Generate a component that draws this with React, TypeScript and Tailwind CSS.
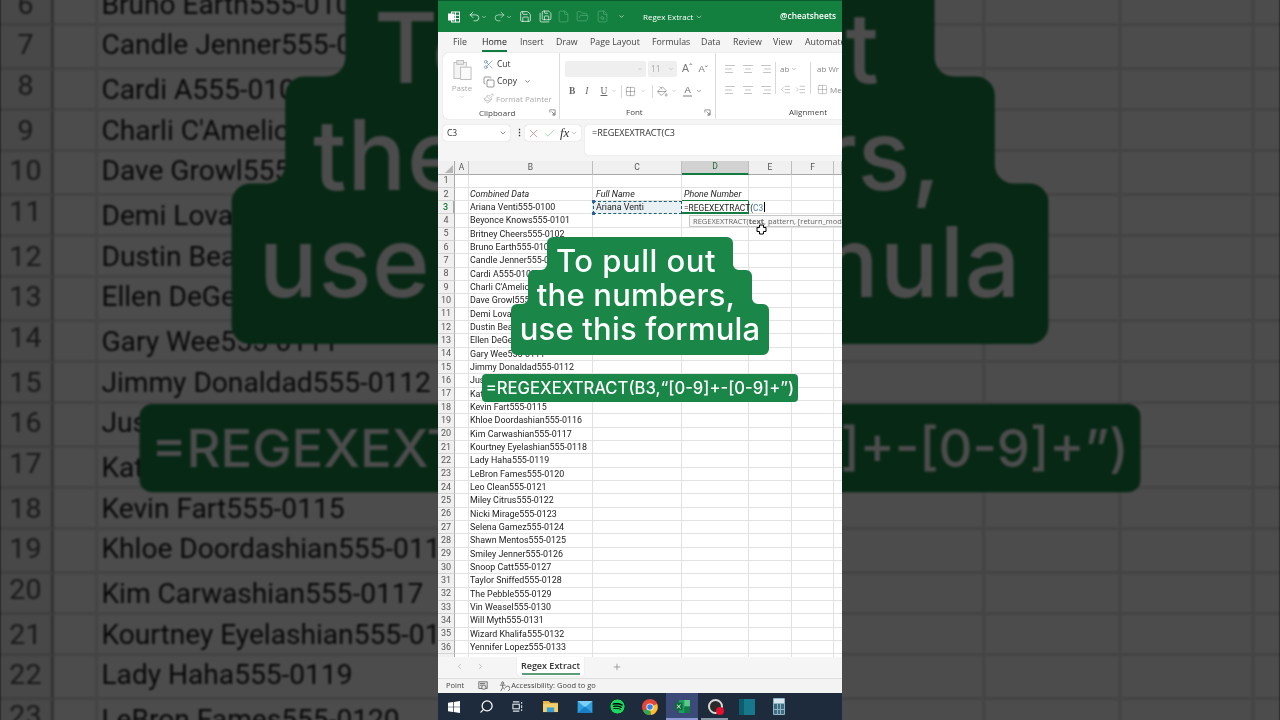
import {
  AlignCenter,
  AlignLeft,
  AlignRight,
  Check,
  ChevronDown,
  ChevronLeft,
  ChevronRight,
  Copy,
  File,
  FileSearch,
  FolderOpen,
  Grid2x2,
  IndentDecrease,
  IndentIncrease,
  PaintBucket,
  Paintbrush,
  Plus,
  Redo2,
  Save,
  SaveAll,
  Scissors,
  Search,
  Undo2,
  X,
} from 'lucide-react';
import { FaSpotify } from 'react-icons/fa';

const ROWS: Record<number, string> = {
  3: 'Ariana Venti555-0100',
  4: 'Beyonce Knows555-0101',
  5: 'Britney Cheers555-0102',
  6: 'Bruno Earth555-0103',
  7: 'Candle Jenner555-0104',
  8: 'Cardi A555-0105',
  9: "Charli C'Amelio555-0106",
  10: 'Dave Growl555-0107',
  11: 'Demi Lovato555-0108',
  12: 'Dustin Beaver555-0109',
  13: 'Ellen DeGenerous555-0110',
  14: 'Gary Wee555-0111',
  15: 'Jimmy Donaldad555-0112',
  16: 'Justin Bieber555-0113',
  17: 'Katy Perry555-0114',
  18: 'Kevin Fart555-0115',
  19: 'Khloe Doordashian555-0116',
  20: 'Kim Carwashian555-0117',
  21: 'Kourtney Eyelashian555-0118',
  22: 'Lady Haha555-0119',
  23: 'LeBron Fames555-0120',
  24: 'Leo Clean555-0121',
  25: 'Miley Citrus555-0122',
  26: 'Nicki Mirage555-0123',
  27: 'Selena Gamez555-0124',
  28: 'Shawn Mentos555-0125',
  29: 'Smiley Jenner555-0126',
  30: 'Snoop Catt555-0127',
  31: 'Taylor Sniffed555-0128',
  32: 'The Pebble555-0129',
  33: 'Vin Weasel555-0130',
  34: 'Will Myth555-0131',
  35: 'Wizard Khalifa555-0132',
  36: 'Yennifer Lopez555-0133',
};

const TABS = [
  { label: 'File', w: 'w-[29px]' },
  { label: 'Home', w: 'w-[38px]' },
  { label: 'Insert', w: 'w-[36px]' },
  { label: 'Draw', w: 'w-[34px]' },
  { label: 'Page Layout', w: 'w-[62px]' },
  { label: 'Formulas', w: 'w-[49px]' },
  { label: 'Data', w: 'w-[32px]' },
  { label: 'Review', w: 'w-[40px]' },
  { label: 'View', w: 'w-[32px]' },
  { label: 'Automate', w: 'w-[50px]' },
];

function Row({ n }: { n: number }) {
  const active = n === 3;
  return (
    <div className="flex h-[13.33px] font-['Roboto',sans-serif] text-[8.9px] leading-[13px] text-[#1c1c1c]">
      <div
        className={`flex w-[17px] items-center justify-center border-r border-b border-r-[#a9a9a9] border-b-[#d4d4d4] bg-[#f0f0f0] text-[9px] ${
          active ? 'border-r-2 border-r-[#107c41] bg-[#dcdcdc] font-medium text-[#107c41]' : 'text-[#555]'
        }`}
      >
        {n}
      </div>
      <div className="w-[14px] border-r border-b border-[#e2e2e2]" />
      <div
        className={`w-[124px] whitespace-nowrap border-r border-b border-[#e2e2e2] pl-[1px] ${
          n === 2 ? 'italic' : ''
        }`}
      >
        {n === 2 ? 'Combined Data' : ROWS[n]}
      </div>
      {active ? (
        <div className="relative w-[89px] border-[1.5px] border-dashed border-[#1f5f72] bg-[#e9f1f5] pl-[2px] leading-[10px]">
          Ariana Venti
          <span className="absolute -top-[2px] -left-[2px] h-[3px] w-[3px] bg-[#2b5fa8]" />
          <span className="absolute -bottom-[2px] -left-[2px] h-[3px] w-[3px] bg-[#2b5fa8]" />
        </div>
      ) : (
        <div className={`w-[89px] border-r border-b border-[#e2e2e2] pl-[3px] ${n === 2 ? 'italic' : ''}`}>
          {n === 2 ? 'Full Name' : ''}
        </div>
      )}
      {active ? (
        <div className="relative w-[67px] whitespace-nowrap border-r border-b-2 border-[#107c41] pl-[2px] text-[8.4px] leading-[12px]">
          =REGEXEXTRACT(<span className="text-[#4f7f9f]">C3</span>
          <span className="ml-[1px] inline-block h-[10px] w-px translate-y-[1px] bg-black" />
        </div>
      ) : (
        <div
          className={`w-[67px] border-r border-b pl-[2px] ${
            n === 2 ? 'border-b-[#107c41] border-r-[#e2e2e2] italic' : 'border-[#e2e2e2]'
          }`}
        >
          {n === 2 ? 'Phone Number' : ''}
        </div>
      )}
      <div className="w-[43px] border-r border-b border-[#e2e2e2]" />
      <div className="w-[42px] border-r border-b border-[#e2e2e2]" />
      <div className="flex-1 border-b border-[#e2e2e2]" />
    </div>
  );
}

function ColHead({ label, w, on }: { label: string; w: string; on?: boolean }) {
  return (
    <div
      className={`flex items-center justify-center border-r border-[#bdbdbd] ${w} ${
        on ? 'border-b-2 border-b-[#107c41] bg-[#d2d2d2] text-[#1b6b3f]' : 'border-b border-b-[#a9a9a9] bg-[#f0f0f0]'
      }`}
    >
      {label}
    </div>
  );
}

function Sheet() {
  const rows = Array.from({ length: 36 }, (_, i) => i + 1);
  return (
    <div className="flex flex-1 flex-col overflow-hidden bg-white">
      <div className="flex h-[13.5px] shrink-0 font-['Roboto',sans-serif] text-[8.5px] text-[#555]">
        <div className="flex w-[17px] items-end justify-end border-r border-b border-[#a9a9a9] bg-[#f0f0f0] pr-[1px] pb-[1px]">
          <div className="h-0 w-0 border-b-[8px] border-l-[8px] border-b-[#b5b5b5] border-l-transparent" />
        </div>
        <ColHead label="A" w="w-[14px]" />
        <ColHead label="B" w="w-[124px]" />
        <ColHead label="C" w="w-[89px]" />
        <ColHead label="D" w="w-[67px]" on />
        <ColHead label="E" w="w-[43px]" />
        <ColHead label="F" w="w-[42px]" />
        <ColHead label="" w="flex-1" />
      </div>
      {rows.map((n) => (
        <Row key={n} n={n} />
      ))}
      <div className="flex flex-1">
        <div className="w-[17px] border-r border-[#a9a9a9] bg-[#f0f0f0]" />
        <div className="w-[14px] border-r border-[#e2e2e2]" />
        <div className="w-[124px] border-r border-[#e2e2e2]" />
        <div className="w-[89px] border-r border-[#e2e2e2]" />
        <div className="w-[67px] border-r border-[#e2e2e2]" />
        <div className="w-[43px] border-r border-[#e2e2e2]" />
        <div className="w-[42px] border-r border-[#e2e2e2]" />
      </div>
    </div>
  );
}

function TitleBar() {
  return (
    <div className="flex h-[32px] shrink-0 items-center border-t border-[#0a5a2e] bg-[#13803f] pl-[10px] font-['Open_Sans',sans-serif] text-white">
      <svg viewBox="0 0 12 12" className="h-[12px] w-[12px]" fill="none" stroke="#fff" strokeWidth="1">
        <rect x="3.5" y="1" width="8" height="10" />
        <path d="M7.5 1v10M3.5 4.3h8M3.5 7.6h8" />
        <rect x="0.5" y="3" width="5.5" height="6" fill="#fff" />
      </svg>
      <Undo2 className="ml-[8px] h-[13px] w-[13px]" strokeWidth={1.3} />
      <ChevronDown className="h-[6px] w-[6px]" strokeWidth={2} />
      <Redo2 className="ml-[6px] h-[13px] w-[13px] text-[#c9e6d4]" strokeWidth={1.3} />
      <ChevronDown className="h-[6px] w-[6px]" strokeWidth={2} />
      <Save className="ml-[7px] h-[13px] w-[13px]" strokeWidth={1.3} />
      <SaveAll className="ml-[7px] h-[13px] w-[13px]" strokeWidth={1.3} />
      <File className="ml-[5px] h-[13px] w-[13px] text-[#52ad79]" strokeWidth={1.3} />
      <FolderOpen className="ml-[6px] h-[13px] w-[13px] text-[#52ad79]" strokeWidth={1.3} />
      <FileSearch className="ml-[7px] h-[13px] w-[13px] text-[#52ad79]" strokeWidth={1.3} />
      <ChevronDown className="ml-[9px] h-[7px] w-[7px]" strokeWidth={2} />
      <span className="ml-[18px] text-[8px]">Regex Extract</span>
      <ChevronDown className="ml-[2px] h-[8px] w-[8px]" strokeWidth={1.5} />
      <span className="ml-auto mr-[6px] text-[8.3px] font-semibold">@cheatsheets</span>
    </div>
  );
}

function TabRow() {
  return (
    <div className="flex h-[21px] shrink-0 items-center pt-[1px] pl-[5px] font-['Open_Sans',sans-serif] text-[8.8px] text-[#444]">
      {TABS.map((t) => (
        <div key={t.label} className={`${t.w} shrink-0 pl-[10px] whitespace-nowrap`}>
          <span className={t.label === 'Home' ? 'border-b-2 border-[#107c41] pb-[2px] text-[#222]' : ''}>{t.label}</span>
        </div>
      ))}
    </div>
  );
}

function Launcher({ className }: { className?: string }) {
  return (
    <svg viewBox="0 0 8 8" className={`h-[7px] w-[7px] ${className ?? ''}`} fill="none" stroke="#888" strokeWidth="1">
      <path d="M1 4V1h6v6H4M3 3l3.5 3.5M6.5 4v2.5H4" />
    </svg>
  );
}

function Clipboard() {
  return (
    <div className="flex w-[117px] shrink-0 flex-col border-r border-[#dcdcdc]">
      <div className="flex flex-1">
        <div className="flex w-[38px] shrink-0 flex-col items-center pt-[6px] text-[8px] text-[#aaa]">
          <svg viewBox="0 0 20 22" className="h-[22px] w-[19px]" fill="none" stroke="#bdbdbd" strokeWidth="1">
            <rect x="1" y="3" width="13" height="17" fill="#f4f4f4" />
            <rect x="4" y="1" width="7" height="4" fill="#e8e8e8" />
            <rect x="8" y="8" width="11" height="13" fill="#fafafa" />
          </svg>
          <span className="mt-[1px]">Paste</span>
          <ChevronDown className="h-[6px] w-[6px]" />
        </div>
        <div className="flex flex-col pt-[3px] text-[8.5px] text-[#333]">
          <div className="flex h-[16px] items-center">
            <Scissors className="ml-[2px] h-[11px] w-[11px] text-[#3a6d9a]" strokeWidth={1.2} />
            <span className="ml-[3px]">Cut</span>
          </div>
          <div className="flex h-[19px] items-center">
            <Copy className="ml-[2px] h-[12px] w-[12px] text-[#555]" strokeWidth={1.2} />
            <span className="ml-[2px]">Copy</span>
            <ChevronDown className="ml-[7px] h-[7px] w-[7px]" strokeWidth={2} />
          </div>
          <div className="flex h-[15px] items-center text-[8px] text-[#aaa]">
            <Paintbrush className="ml-[2px] h-[11px] w-[11px]" strokeWidth={1.4} />
            <span className="ml-[2px] whitespace-nowrap">Format Painter</span>
          </div>
        </div>
      </div>
      <div className="flex h-[14px] items-center pl-[36px] text-[8px] text-[#444]">
        Clipboard
        <Launcher className="ml-[34px]" />
      </div>
    </div>
  );
}

function Font() {
  return (
    <div className="flex w-[156px] shrink-0 flex-col border-r border-[#dcdcdc] text-[#666]">
      <div className="flex-1 pt-[8px] pl-[5px]">
        <div className="flex items-center">
          <div className="flex h-[16px] w-[81px] items-center justify-end rounded-[2px] bg-[#efefef] pr-[3px]">
            <ChevronDown className="h-[6px] w-[6px] text-[#aaa]" strokeWidth={2} />
          </div>
          <div className="ml-[2px] flex h-[16px] w-[29px] items-center justify-between rounded-[2px] bg-[#efefef] px-[3px] text-[8.5px] text-[#aaa]">
            11
            <ChevronDown className="h-[6px] w-[6px]" strokeWidth={2} />
          </div>
          <span className="ml-[5px] font-['Liberation_Sans',sans-serif] text-[10.5px] text-[#777]">Aˆ</span>
          <span className="ml-[6px] font-['Liberation_Sans',sans-serif] text-[9.5px] text-[#777]">Aˇ</span>
        </div>
        <div className="mt-[6px] flex h-[16px] items-center pl-[4px] font-['Liberation_Serif',serif] text-[9.5px]">
          <span className="font-bold">B</span>
          <span className="ml-[10px] italic">I</span>
          <span className="ml-[12px] underline">U</span>
          <ChevronDown className="ml-[4px] h-[6px] w-[6px] text-[#aaa]" strokeWidth={2} />
          <span className="ml-[4px] h-[13px] w-px bg-[#d8d8d8]" />
          <Grid2x2 className="ml-[3px] h-[11px] w-[11px]" strokeWidth={1} />
          <ChevronDown className="ml-[4px] h-[6px] w-[6px] text-[#aaa]" strokeWidth={2} />
          <span className="ml-[6px] h-[13px] w-px bg-[#d8d8d8]" />
          <PaintBucket className="ml-[4px] h-[11px] w-[11px]" strokeWidth={1.2} />
          <ChevronDown className="ml-[3px] h-[6px] w-[6px] text-[#aaa]" strokeWidth={2} />
          <span className="ml-[6px] border-b-2 border-[#bdbdbd] px-[1px] font-['Liberation_Sans',sans-serif] leading-[10px]">A</span>
          <ChevronDown className="ml-[4px] h-[6px] w-[6px] text-[#444]" strokeWidth={2} />
        </div>
      </div>
      <div className="flex h-[14px] items-center pl-[66px] text-[8px] text-[#444]">
        Font
        <Launcher className="ml-[61px]" />
      </div>
    </div>
  );
}

function Alignment() {
  return (
    <div className="flex flex-1 flex-col text-[#888]">
      <div className="flex flex-1 pt-[9px] pl-[8px]">
        <div className="flex flex-col gap-[8px]">
          <div className="flex h-[13px] items-center gap-[6px]">
            <AlignLeft className="h-[12px] w-[12px]" strokeWidth={1} />
            <AlignCenter className="h-[12px] w-[12px]" strokeWidth={1} />
            <AlignRight className="h-[12px] w-[12px]" strokeWidth={1} />
          </div>
          <div className="flex h-[13px] items-center gap-[6px]">
            <AlignLeft className="h-[12px] w-[12px]" strokeWidth={1} />
            <AlignCenter className="h-[12px] w-[12px]" strokeWidth={1} />
            <AlignRight className="h-[12px] w-[12px]" strokeWidth={1} />
          </div>
        </div>
        <span className="ml-[3px] h-[32px] w-px bg-[#d8d8d8]" />
        <div className="ml-[4px] flex w-[30px] flex-col gap-[8px]">
          <div className="flex h-[13px] items-center gap-[2px] text-[8px]">
            ab
            <ChevronDown className="h-[6px] w-[6px]" strokeWidth={2} />
          </div>
          <div className="flex h-[13px] items-center gap-[4px]">
            <IndentDecrease className="h-[11px] w-[11px]" strokeWidth={1} />
            <IndentIncrease className="h-[11px] w-[11px]" strokeWidth={1} />
          </div>
        </div>
        <span className="h-[32px] w-px bg-[#d8d8d8]" />
        <div className="ml-[6px] flex flex-col gap-[8px] whitespace-nowrap text-[8px]">
          <div className="flex h-[13px] items-center gap-[2px]">ab Wr</div>
          <div className="flex h-[13px] items-center gap-[2px]">
            <Grid2x2 className="h-[11px] w-[11px]" strokeWidth={1} />
            Me
          </div>
        </div>
      </div>
      <div className="flex h-[14px] items-center pl-[73px] text-[8px] text-[#444]">Alignment</div>
    </div>
  );
}

function Ribbon() {
  return (
    <div className="ml-[5px] flex h-[66px] shrink-0 rounded-l-[5px] bg-white font-['Open_Sans',sans-serif] shadow-[0_0_1px_rgba(0,0,0,0.25)]">
      <Clipboard />
      <Font />
      <Alignment />
    </div>
  );
}

function FormulaBar() {
  return (
    <div className="flex h-[42px] shrink-0 items-start pt-[6px] pl-[5px] font-['Open_Sans',sans-serif] text-[#333]">
      <div className="flex h-[16px] w-[67px] items-center justify-between rounded-[3px] bg-white pr-[3px] pl-[4px] text-[8.5px] shadow-[0_0_1px_rgba(0,0,0,0.3)]">
        C3
        <ChevronDown className="h-[8px] w-[8px]" strokeWidth={1.6} />
      </div>
      <span className="ml-[5px] w-[4px] text-[9px] font-bold leading-[15px]">⋮</span>
      <div className="ml-[6px] flex h-[16px] w-[56px] items-center rounded-[3px] bg-white pl-[2px] shadow-[0_0_1px_rgba(0,0,0,0.3)]">
        <X className="h-[13px] w-[13px] text-[#c87070]" strokeWidth={1.2} />
        <Check className="ml-[3px] h-[13px] w-[13px] text-[#7cb98f]" strokeWidth={1.2} />
        <span className="ml-[4px] font-['Liberation_Serif',serif] text-[13px] italic">fx</span>
        <ChevronDown className="ml-[1px] h-[8px] w-[8px] text-[#888]" strokeWidth={1.4} />
      </div>
      <div className="ml-[4px] h-[30px] flex-1 rounded-l-[3px] bg-white pt-[1px] pl-[7px] text-[9px] shadow-[0_0_1px_rgba(0,0,0,0.3)]">
        =REGEXEXTRACT(C3
      </div>
    </div>
  );
}

function SheetTabs() {
  return (
    <div className="flex h-[21px] shrink-0 items-start bg-[#f5f5f5] font-['Open_Sans',sans-serif] text-[#888]">
      <ChevronLeft className="ml-[17px] mt-[5px] h-[9px] w-[9px] text-[#999]" strokeWidth={1.5} />
      <ChevronRight className="ml-[12px] mt-[5px] h-[9px] w-[9px] text-[#999]" strokeWidth={1.5} />
      <div className="ml-[32px] flex h-[19px] w-[67px] flex-col items-center rounded-b-[3px] bg-white pt-[2px] text-[9px] font-semibold text-[#333] shadow-[0_0_1px_rgba(0,0,0,0.2)]">
        Regex Extract
        <span className="h-[2px] w-[58px] bg-[#5d9c78]" />
      </div>
      <Plus className="ml-[28px] mt-[5px] h-[10px] w-[10px] text-[#555]" strokeWidth={1.2} />
    </div>
  );
}

function StatusBar() {
  return (
    <div className="flex h-[15px] shrink-0 items-center border-t border-[#dedede] bg-[#f3f3f3] pl-[8px] font-['Open_Sans',sans-serif] text-[7.5px] text-[#444]">
      <span>Point</span>
      <svg viewBox="0 0 12 12" className="ml-[14px] h-[10px] w-[10px]" fill="#e5e5e5" stroke="#555" strokeWidth="0.9">
        <rect x="1" y="1" width="10" height="8" />
        <circle cx="7" cy="7.5" r="2.6" />
        <path d="M2.5 3h6M2.5 5h3" />
      </svg>
      <svg viewBox="0 0 12 12" className="ml-[11px] h-[11px] w-[11px]" fill="none" stroke="#555" strokeWidth="0.9">
        <circle cx="4" cy="2.2" r="1.2" />
        <path d="M1 4.5h6M4 4.5V7l-2 4M4 7l2.5 2M7 7.5a2.5 2.5 0 1 1 3 3" />
      </svg>
      <span className="ml-[1px]">Accessibility: Good to go</span>
    </div>
  );
}

function Taskbar() {
  return (
    <div className="flex h-[27px] shrink-0 items-center bg-[#1d2b3c]">
      <div className="flex w-[32px] justify-center">
        <svg viewBox="0 0 12 12" className="h-[12px] w-[12px]" fill="#fff">
          <path d="M0 1.7 5 1v4.7H0zM5.7.9 12 0v5.7H5.7zM0 6.3h5V11l-5-.7zM5.7 6.3H12V12l-6.3-.9z" />
        </svg>
      </div>
      <div className="flex w-[32px] justify-center">
        <Search className="h-[15px] w-[15px] -scale-x-100 text-white" strokeWidth={2} />
      </div>
      <div className="flex w-[31px] justify-center">
        <svg viewBox="0 0 12 12" className="h-[11px] w-[11px]" fill="none" stroke="#dfe5ea" strokeWidth="1.2">
          <path d="M1 1h7M1 11h7" />
          <rect x="1" y="3.5" width="7" height="5" />
          <path d="M10.5 1v2M10.5 4.5v3M10.5 9v2" />
        </svg>
      </div>
      <div className="flex w-[35px] justify-center">
        <svg viewBox="0 0 16 14" className="h-[13px] w-[15px]">
          <path d="M0 1h6l2 2h8v10H0z" fill="#e8b84a" />
          <rect x="0" y="4" width="16" height="9" fill="#f5cf6b" />
          <rect x="4" y="8" width="8" height="5" fill="#3aa0d8" />
        </svg>
      </div>
      <div className="flex w-[33px] justify-center">
        <svg viewBox="0 0 16 13" className="h-[12px] w-[16px]">
          <rect width="16" height="13" fill="#2f9fe0" />
          <path d="M0 0l8 7 8-7z" fill="#7cd0f5" />
          <path d="M0 13l8-7 8 7z" fill="#1a7fc4" />
        </svg>
      </div>
      <div className="flex w-[33px] justify-center">
        <FaSpotify className="h-[15px] w-[15px] rounded-full bg-black text-[#1ed760]" />
      </div>
      <div className="flex w-[32px] justify-center">
        <svg viewBox="0 0 16 16" className="h-[16px] w-[16px]">
          <circle cx="8" cy="8" r="8" fill="#e0483a" />
          <path d="M8 8 1 12a8 8 0 0 0 8 4z" fill="#34a853" />
          <path d="M8 8l7-3a8 8 0 0 1-6 11z" fill="#fbc02d" />
          <circle cx="8" cy="8" r="3.6" fill="#fff" />
          <circle cx="8" cy="8" r="2.8" fill="#3b82e8" />
        </svg>
      </div>
      <div className="relative flex h-full w-[32px] items-center justify-center bg-[#3c4a78]">
        <svg viewBox="0 0 16 14" className="h-[13px] w-[15px]">
          <rect x="4" width="12" height="14" rx="1" fill="#1e9e5c" />
          <rect x="10" width="6" height="7" fill="#5cc98c" />
          <rect x="10" y="7" width="6" height="7" fill="#127a44" />
          <rect y="3" width="8" height="8" rx="1" fill="#0c6b39" />
          <path d="M2 5l4 4M6 5 2 9" stroke="#fff" strokeWidth="1" />
        </svg>
        <span className="absolute right-0 bottom-0 left-0 h-[2px] bg-[#8f99d6]" />
      </div>
      <div className="relative flex h-full w-[35px] items-center justify-center">
        <div className="relative h-[15px] w-[15px] rounded-full border-2 border-[#d8d8d8] bg-[#2a2a2a]">
          <span className="absolute -right-[3px] -bottom-[3px] h-[8px] w-[8px] rounded-full bg-[#e8112d]" />
        </div>
        <span className="absolute right-[5px] bottom-0 left-[3px] h-[2px] bg-[#8a97a6]" />
      </div>
      <div className="flex w-[28px] justify-center">
        <div className="flex h-[16px] w-[16px]">
          <span className="w-[5px] bg-[#0d5c6e]" />
          <span className="flex-1 bg-[#17788c]" />
        </div>
      </div>
      <div className="flex w-[36px] justify-center">
        <div className="flex h-[17px] w-[12px] flex-col gap-[1px] rounded-[1px] bg-[#8fb3c4] p-[1px]">
          <span className="h-[4px] bg-[#d7e6ee]" />
          <span className="grid flex-1 grid-cols-3 gap-[1px]">
            <i className="bg-[#3f6b80]" />
            <i className="bg-[#3f6b80]" />
            <i className="bg-[#3f6b80]" />
            <i className="bg-[#3f6b80]" />
            <i className="bg-[#3f6b80]" />
            <i className="bg-[#3f6b80]" />
          </span>
        </div>
      </div>
    </div>
  );
}

function Captions() {
  return (
    <>
      <div className="absolute top-[237px] left-[73px] h-[118px] w-[258px] font-['Inter',sans-serif] font-medium text-white">
        <svg viewBox="0 0 258 118" className="absolute inset-0 h-full w-full">
          <path
            fill="#1a8748"
            d="M42 0H216a6 6 0 0 1 6 6V27a6 6 0 0 0 6 6h7a6 6 0 0 1 6 6V61a6 6 0 0 0 6 6h5a6 6 0 0 1 6 6v39a6 6 0 0 1-6 6H6a6 6 0 0 1-6-6V73a6 6 0 0 1 6-6h5a6 6 0 0 0 6-6V39a6 6 0 0 1 6-6h7a6 6 0 0 0 6-6V6a6 6 0 0 1 6-6z"
          />
        </svg>
        <div className="relative flex flex-col items-center pt-[7px] text-[31px] leading-[34px] tracking-[0.2px]">
          <span className="mr-[8px] tracking-[0.5px]">To pull out</span>
          <span className="mr-[8px]">the numbers,</span>
          <span>use this formula</span>
        </div>
      </div>
      <div className="absolute top-[374px] left-[44px] flex h-[28px] w-[316px] items-center justify-center rounded-[4px] bg-[#1a8748] font-['Inter',sans-serif] text-[16.6px] font-medium whitespace-nowrap text-white">
        =REGEXEXTRACT(B3,“[0-9]+-[0-9]+”)
      </div>
    </>
  );
}

function Screen() {
  return (
    <div className="relative flex h-[720px] w-[404px] flex-col overflow-hidden bg-[#f5f5f5]">
      <TitleBar />
      <TabRow />
      <Ribbon />
      <FormulaBar />
      <Sheet />
      <SheetTabs />
      <StatusBar />
      <Taskbar />
      <div className="absolute top-[215px] left-[251px] h-[12px] w-[160px] border border-[#c8c8c8] bg-[#f8f8f8] pl-[3px] font-['Open_Sans',sans-serif] text-[7.5px] leading-[10px] whitespace-nowrap text-[#666]">
        REGEXEXTRACT(<span className="font-bold">text</span>, pattern, [return_mode]
      </div>
      <svg viewBox="0 0 11 11" className="absolute top-[224px] left-[318px] h-[11px] w-[11px]" fill="#fff" stroke="#000" strokeWidth="1">
        <path d="M3.5 1h4v2.5H10v4H7.5V10h-4V7.5H1v-4h2.5z" />
      </svg>
      <Captions />
    </div>
  );
}

export default function App() {
  return (
    <div className="relative flex h-[720px] w-[1280px] justify-center overflow-hidden bg-black">
      <div aria-hidden className="absolute inset-0 flex justify-center overflow-hidden">
        <div className="shrink-0 scale-x-[3.168] scale-y-[3.15] blur-[0.4px]">
          <Screen />
        </div>
        <div className="absolute inset-0 bg-black/70" />
      </div>
      <div className="relative blur-[0.3px]">
        <Screen />
      </div>
    </div>
  );
}
